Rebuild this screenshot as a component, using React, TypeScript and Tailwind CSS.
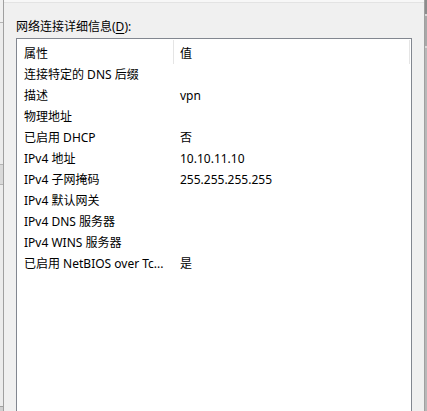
const rows: [string, string][] = [
  ['连接特定的 DNS 后缀', ''],
  ['描述', 'vpn'],
  ['物理地址', ''],
  ['已启用 DHCP', '否'],
  ['IPv4 地址', '10.10.11.10'],
  ['IPv4 子网掩码', '255.255.255.255'],
  ['IPv4 默认网关', ''],
  ['IPv4 DNS 服务器', ''],
  ['IPv4 WINS 服务器', ''],
  ['已启用 NetBIOS over Tc...', '是'],
]

export default function App() {
  return (
    <div className="flex w-[427px] h-[411px] overflow-hidden bg-[#f0f0f0] text-[12px] leading-[16px] text-[#000] font-['Noto_Sans','Noto_Sans_CJK_SC',sans-serif]">
      {/* window edge behind, left */}
      <div className="flex flex-col w-[4px] shrink-0 border-r border-[#a0a0a0]">
        <div className="h-[23px] bg-[#f0f0f0] border-b border-[#b4b4b4]" />
        <div className="h-[141px] bg-[#ececec]" />
        <div className="h-[21px] bg-[#d9d9d9] border-y border-[#b4b4b4]" />
        <div className="flex-1 bg-[#ececec]" />
        <div className="h-[5px] bg-[#d0d0d0] border-t border-[#a0a0a0]" />
      </div>

      <div className="flex flex-col flex-1">
        <div className="h-[3px] bg-[#f7f7f7] border-b border-[#e3e3e3]" />
        <div className="flex flex-col px-[12px] pt-[16px] flex-1">
          <div className="h-[16px] whitespace-nowrap">
            网络连接详细信息(<span className="underline underline-offset-2">D</span>):
          </div>
          <div className="mt-[3px] flex-1 bg-white border border-[#828790] border-b-0">
            <div className="flex h-[25px] pt-[1px]">
              <div className="w-[157px] pl-[7px] pt-[6px] border-r border-[#e5e5e5]">属性</div>
              <div className="flex-1 pl-[6px] pt-[6px]">值</div>
              <div className="w-px mr-px bg-[#e5e5e5]" />
            </div>
            {rows.map(([name, value]) => (
              <div key={name} className="flex h-[21px] pt-[3px]">
                <div className="w-[157px] pl-[7px] whitespace-nowrap overflow-hidden">{name}</div>
                <div className="flex-1 pl-[6px] whitespace-nowrap">{value}</div>
              </div>
            ))}
          </div>
        </div>
      </div>

      {/* window edge behind, right */}
      <div className="flex flex-col w-[3px] shrink-0 border-l border-[#a0a0a0]">
        <div className="h-[14px] bg-[#8c8c8c]" />
        <div className="h-[2px] bg-[#d8d8d8]" />
        <div className="h-[30px] bg-[#a8a8a8]" />
        <div className="h-[2px] bg-[#d8d8d8]" />
        <div className="flex-1 bg-[#b8b8b8]" />
      </div>
    </div>
  )
}
